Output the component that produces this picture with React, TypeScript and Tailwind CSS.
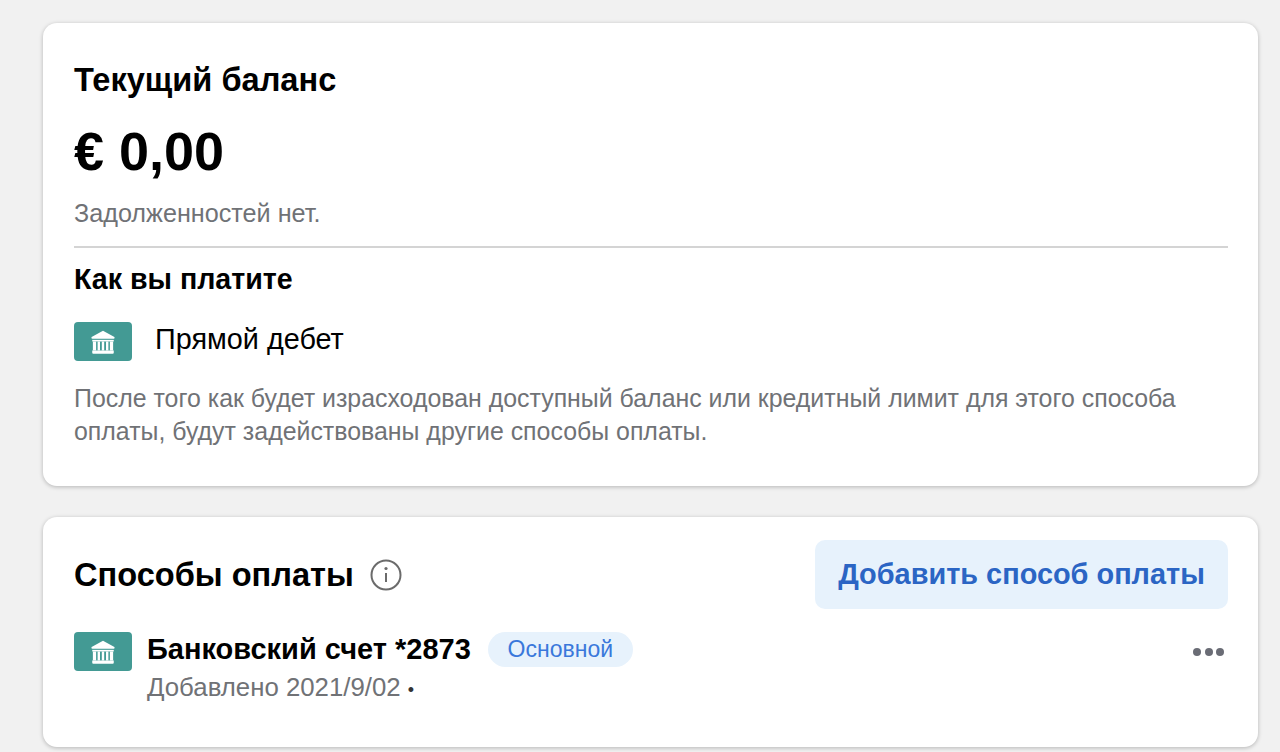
import React from "react";

const BankBadge = () => (
  <div className="flex h-[39px] w-[58px] shrink-0 items-center justify-center rounded-[4px] bg-[#439a94]">
    <svg width="28" height="28" viewBox="0 0 26 26" fill="#ffffff">
      <path d="M13 2.5 L23.6 8.4 Q24.2 9.8 23 10 L3 10 Q1.8 9.8 2.4 8.4 Z" />
      <path d="M3 11 H23 V12.5 H3 Z" />
      <path d="M3.6 12.5 H6.6 V21 H3.6 Z M8 12.5 H10.2 V21 H8 Z M11.9 12.5 H14.1 V21 H11.9 Z M15.8 12.5 H18 V21 H15.8 Z M19.4 12.5 H22.4 V21 H19.4 Z" />
      <path d="M3 21 H23 V23 Q23 24 22 24 H4 Q3 24 3 23 Z" />
    </svg>
  </div>
);

const App: React.FC = () => {
  return (
    <div className="h-[752px] overflow-hidden bg-[#f1f1f1] pl-[43px] pr-[22px] pt-[23px] font-['Liberation_Sans',Arial,sans-serif] text-black">
      <section className="h-[463px] rounded-[14px] bg-white pl-[31px] pr-[30px] pt-[39px] shadow-[0_1px_4px_rgba(0,0,0,0.25)]">
        <h2 className="text-[32.6px] font-bold leading-[36px]">Текущий баланс</h2>
        <div className="mt-[22px] text-[54px] font-bold leading-[62px]">€ 0,00</div>
        <p className="mt-[16px] text-[25.2px] leading-[30px] text-[#707276]">Задолженностей нет.</p>
        <div className="mt-[18px] border-t-2 border-[#d4d4d4]" />
        <h3 className="mt-[15px] text-[28.6px] font-bold leading-[32px]">Как вы платите</h3>
        <div className="mt-[27px] flex items-center gap-[23px]">
          <BankBadge />
          <span className="-translate-y-[3px] text-[28.8px] leading-[36px]">Прямой дебет</span>
        </div>
        <p className="mt-[21px] text-[24.9px] leading-[33px] text-[#707276]">
          После того как будет израсходован доступный баланс или кредитный лимит для этого способа
          <br />
          оплаты, будут задействованы другие способы оплаты.
        </p>
      </section>

      <section className="mt-[31px] h-[230px] rounded-[14px] bg-white pl-[31px] pr-[30px] pt-[23px] shadow-[0_1px_4px_rgba(0,0,0,0.25)]">
        <div className="flex items-center justify-between">
          <div className="flex items-center gap-[16px]">
            <h2 className="text-[32.6px] font-bold leading-[38px]">Способы оплаты</h2>
            <svg width="32" height="32" viewBox="0 0 32 32" fill="none" stroke="#6b6b6b">
              <circle cx="16" cy="16" r="14.5" strokeWidth="2" />
              <circle cx="16" cy="9.5" r="1.6" fill="#6b6b6b" stroke="none" />
              <path d="M16 14 V23" strokeWidth="2" />
            </svg>
          </div>
          <button className="h-[69px] w-[413px] rounded-[10px] bg-[#e7f2fc] text-[28.9px] font-bold text-[#2b65c4]">
            Добавить способ оплаты
          </button>
        </div>
        <div className="mt-[23px] flex items-start">
          <BankBadge />
          <div className="ml-[15px] flex-1">
            <div className="flex items-center">
              <span className="text-[29px] font-bold leading-[35px]">Банковский счет *2873</span>
              <span className="ml-[17px] flex h-[35px] w-[145px] items-center justify-center rounded-full bg-[#e7f2fc] text-[23px] text-[#3a78db]">
                Основной
              </span>
            </div>
            <div className="mt-[5px] text-[25.8px] leading-[30px] text-[#707276]">
              Добавлено 2021/9/02 <span className="text-[18px] text-[#333333]">•</span>
            </div>
          </div>
          <div className="mr-[4px] mt-[16px] flex gap-[3.5px]">
            <span className="h-[8px] w-[8px] rounded-full bg-[#6a6c75]" />
            <span className="h-[8px] w-[8px] rounded-full bg-[#6a6c75]" />
            <span className="h-[8px] w-[8px] rounded-full bg-[#6a6c75]" />
          </div>
        </div>
      </section>
    </div>
  );
};

export default App;
